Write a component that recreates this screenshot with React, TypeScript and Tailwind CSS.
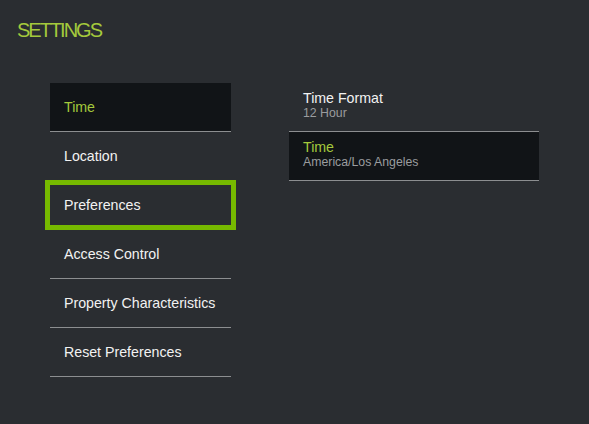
const menu = [
  "Time",
  "Location",
  "Preferences",
  "Access Control",
  "Property Characteristics",
  "Reset Preferences",
];

const details = [
  { title: "Time Format", value: "12 Hour" },
  { title: "Time", value: "America/Los Angeles" },
];

export default function App() {
  const active = 0;
  const focused = 2;
  const activeDetail = 1;

  return (
    <div
      className="w-[589px] h-[424px] bg-[#2a2d31] overflow-hidden"
      style={{ fontFamily: '"Liberation Sans", Arial, sans-serif' }}
    >
      <h1 className="pl-[17px] pt-[18px] text-[20px] leading-[24px] tracking-[-2px] text-[#a4c93c]">
        SETTINGS
      </h1>

      <div className="flex mt-[41px] pl-[50px] gap-[58px]">
        {/* Left menu */}
        <ul className="w-[181px]">
          {menu.map((label, i) => (
            <li key={label} className="relative">
              <div
                className={`h-[49px] flex items-center pl-[14px] border-b border-[#8c8e90] text-[14.2px] leading-[16px] ${
                  i === active ? "bg-[#111417] text-[#a4c93c]" : "text-[#f2f2f2]"
                }`}
              >
                {label}
              </div>
              {i === focused && (
                <div className="absolute left-[-5px] right-[-5px] top-[-1px] bottom-0 border-[5px] border-[#76b900]"></div>
              )}
            </li>
          ))}
        </ul>

        {/* Detail list */}
        <ul className="w-[250px]">
          {details.map((d, i) => (
            <li
              key={d.title}
              className={`h-[49px] pt-[7px] pl-[14px] border-b border-[#8c8e90] ${
                i === activeDetail ? "bg-[#111417]" : ""
              }`}
            >
              <div
                className={`text-[14.2px] leading-[16px] ${
                  i === activeDetail ? "text-[#a4c93c]" : "text-[#f2f2f2]"
                }`}
              >
                {d.title}
              </div>
              <div className="text-[12.3px] leading-[14px] text-[#9a9c9f]">{d.value}</div>
            </li>
          ))}
        </ul>
      </div>
    </div>
  );
}
